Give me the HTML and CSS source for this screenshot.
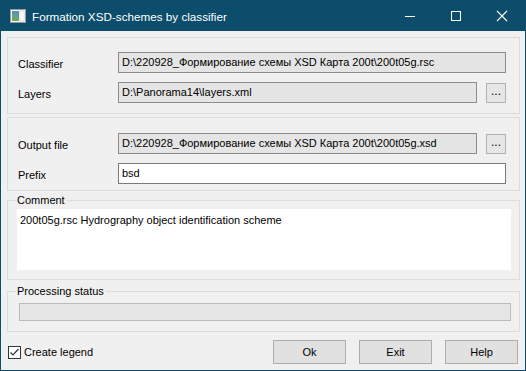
FILE: index.html
```html
<!DOCTYPE html>
<html lang="en">
<head>
    <meta charset="UTF-8">
    <title>Formation XSD-schemes by classifier</title>
    <link rel="stylesheet" href="styles.css">
</head>
<body>
    <div class="window">
        <div class="titlebar">
            <svg class="app-icon" width="16" height="14" viewBox="0 0 16 14">
                <defs>
                    <linearGradient id="pane" x1="0" y1="0" x2="0" y2="1">
                        <stop offset="0" stop-color="#5a8fb8"/>
                        <stop offset="1" stop-color="#6fae5e"/>
                    </linearGradient>
                </defs>
                <rect x="0.5" y="0.5" width="15" height="13" fill="#f4f4f4" stroke="#9a9a9a"/>
                <rect x="2" y="2" width="7" height="10" fill="url(#pane)"/>
                <rect x="10" y="2" width="4" height="10" fill="#ffffff" stroke="#c8c8c8" stroke-width="0.5"/>
            </svg>
            <span class="title">Formation XSD-schemes by classifier</span>
            <div class="caption-btns">
                <svg class="cap" width="46" height="31" viewBox="0 0 46 31"><line x1="18" y1="16.5" x2="28" y2="16.5" stroke="#fff"/></svg>
                <svg class="cap" width="46" height="31" viewBox="0 0 46 31"><rect x="18.5" y="11.5" width="9" height="9" fill="none" stroke="#fff"/></svg>
                <svg class="cap" width="46" height="31" viewBox="0 0 46 31"><path d="M18 11 L28 21 M28 11 L18 21" stroke="#fff" stroke-width="1.1"/></svg>
            </div>
        </div>

        <div class="content">
            <div class="group group-source">
                <div class="row">
                    <label class="label">Classifier</label>
                    <div class="field disabled">D:\220928_Формирование схемы XSD Карта 200t\200t05g.rsc</div>
                </div>
                <div class="row">
                    <label class="label">Layers</label>
                    <div class="field disabled">D:\Panorama14\layers.xml</div>
                    <button class="browse">...</button>
                </div>
            </div>

            <div class="group group-output">
                <div class="row">
                    <label class="label">Output file</label>
                    <div class="field disabled">D:\220928_Формирование схемы XSD Карта 200t\200t05g.xsd</div>
                    <button class="browse">...</button>
                </div>
                <div class="row">
                    <label class="label">Prefix</label>
                    <div class="field">bsd</div>
                </div>
            </div>

            <div class="group titled group-comment">
                <span class="legend">Comment</span>
                <div class="memo">200t05g.rsc Hydrography object identification scheme</div>
            </div>

            <div class="group titled group-status">
                <span class="legend">Processing status</span>
                <div class="progress"></div>
            </div>

            <div class="footer">
                <label class="check">
                    <svg class="box" width="13" height="13" viewBox="0 0 13 13">
                        <rect x="0.5" y="0.5" width="12" height="12" fill="#fff" stroke="#333"/>
                        <polyline points="2.5,6.5 5,9 10.5,3" fill="none" stroke="#333" stroke-width="1.2"/>
                    </svg>
                    Create legend
                </label>
                <div class="buttons">
                    <button class="btn">Ok</button>
                    <button class="btn">Exit</button>
                    <button class="btn">Help</button>
                </div>
            </div>
        </div>
    </div>
</body>
</html>
```

FILE: styles.css
```css
body {
    margin: 0;
    font-family: 'Liberation Sans', Arial, sans-serif;
    font-size: 11px;
    color: #000;
    background: #f0f0f0;
}
.window {
    width: 526px;
    height: 371px;
    box-sizing: border-box;
    border: 1px solid #0b4d6b;
    border-top: none;
    background: #f0f0f0;
    display: flex;
    flex-direction: column;
}
.titlebar {
    height: 31px;
    background: #0b4d6b;
    display: flex;
    align-items: center;
    color: #fff;
    flex-shrink: 0;
}
.app-icon {
    margin-left: 9px;
    margin-top: 1px;
}
.title {
    margin-left: 6px;
    font-size: 11.7px;
    margin-top: 1px;
}
.caption-btns {
    margin-left: auto;
    display: flex;
}
.cap {
    display: block;
}
.content {
    padding: 6px 5px 0 6px;
    display: flex;
    flex-direction: column;
    flex: 1;
}
.group {
    border: 1px solid #dcdcdc;
    position: relative;
}
.group-source {
    padding: 14px 13px 0 10px;
    box-sizing: border-box;
    height: 77px;
    display: flex;
    flex-direction: column;
    gap: 9px;
}
.group-output {
    margin-top: 3px;
    height: 74px;
    box-sizing: border-box;
    padding: 15px 13px 0 10px;
    display: flex;
    flex-direction: column;
    gap: 9px;
}
.row {
    display: flex;
    align-items: center;
    height: 21px;
}
.label {
    width: 100px;
    flex-shrink: 0;
    padding-top: 3px;
}
.field {
    flex: 1;
    height: 21px;
    box-sizing: border-box;
    border: 1px solid #7a7a7a;
    background: #fff;
    padding: 3px 3px 0 3px;
    white-space: nowrap;
    overflow: hidden;
}
.field.disabled {
    background: #e5e5e5;
    border-color: #8c8c8c;
}
.browse {
    margin-left: 9px;
    width: 20px;
    height: 20px;
    padding: 0 0 3px 0;
    border: 1px solid #b0b0b0;
    background: #e6e6e6;
    font-family: inherit;
    font-size: 12px;
    line-height: 12px;
    color: #000;
}
.legend {
    position: absolute;
    top: -8px;
    left: 8px;
    padding: 0 2px 0 1px;
    background: #f0f0f0;
    line-height: 14px;
}
.group-comment {
    margin-top: 9px;
    height: 80px;
    box-sizing: border-box;
    padding: 8px 8px 0 9px;
}
.memo {
    background: #fff;
    height: 61px;
    padding: 5px 3px 0 3px;
    box-sizing: border-box;
}
.group-status {
    margin-top: 11px;
    height: 41px;
    box-sizing: border-box;
    padding: 11px 8px 0 11px;
}
.progress {
    height: 18px;
    box-sizing: border-box;
    border: 1px solid #bcbcbc;
    background: #e6e6e6;
}
.footer {
    margin-top: 8px;
    display: flex;
    align-items: center;
    height: 24px;
}
.check {
    display: flex;
    align-items: center;
    gap: 3px;
    margin-left: 1px;
}
.box {
    display: block;
}
.buttons {
    margin-left: auto;
    display: flex;
    gap: 13px;
    margin-right: 2px;
}
.btn {
    width: 73px;
    height: 24px;
    border: 1px solid #adadad;
    background: #e1e1e1;
    font-family: inherit;
    font-size: 11px;
    color: #000;
    padding: 0;
}
```
